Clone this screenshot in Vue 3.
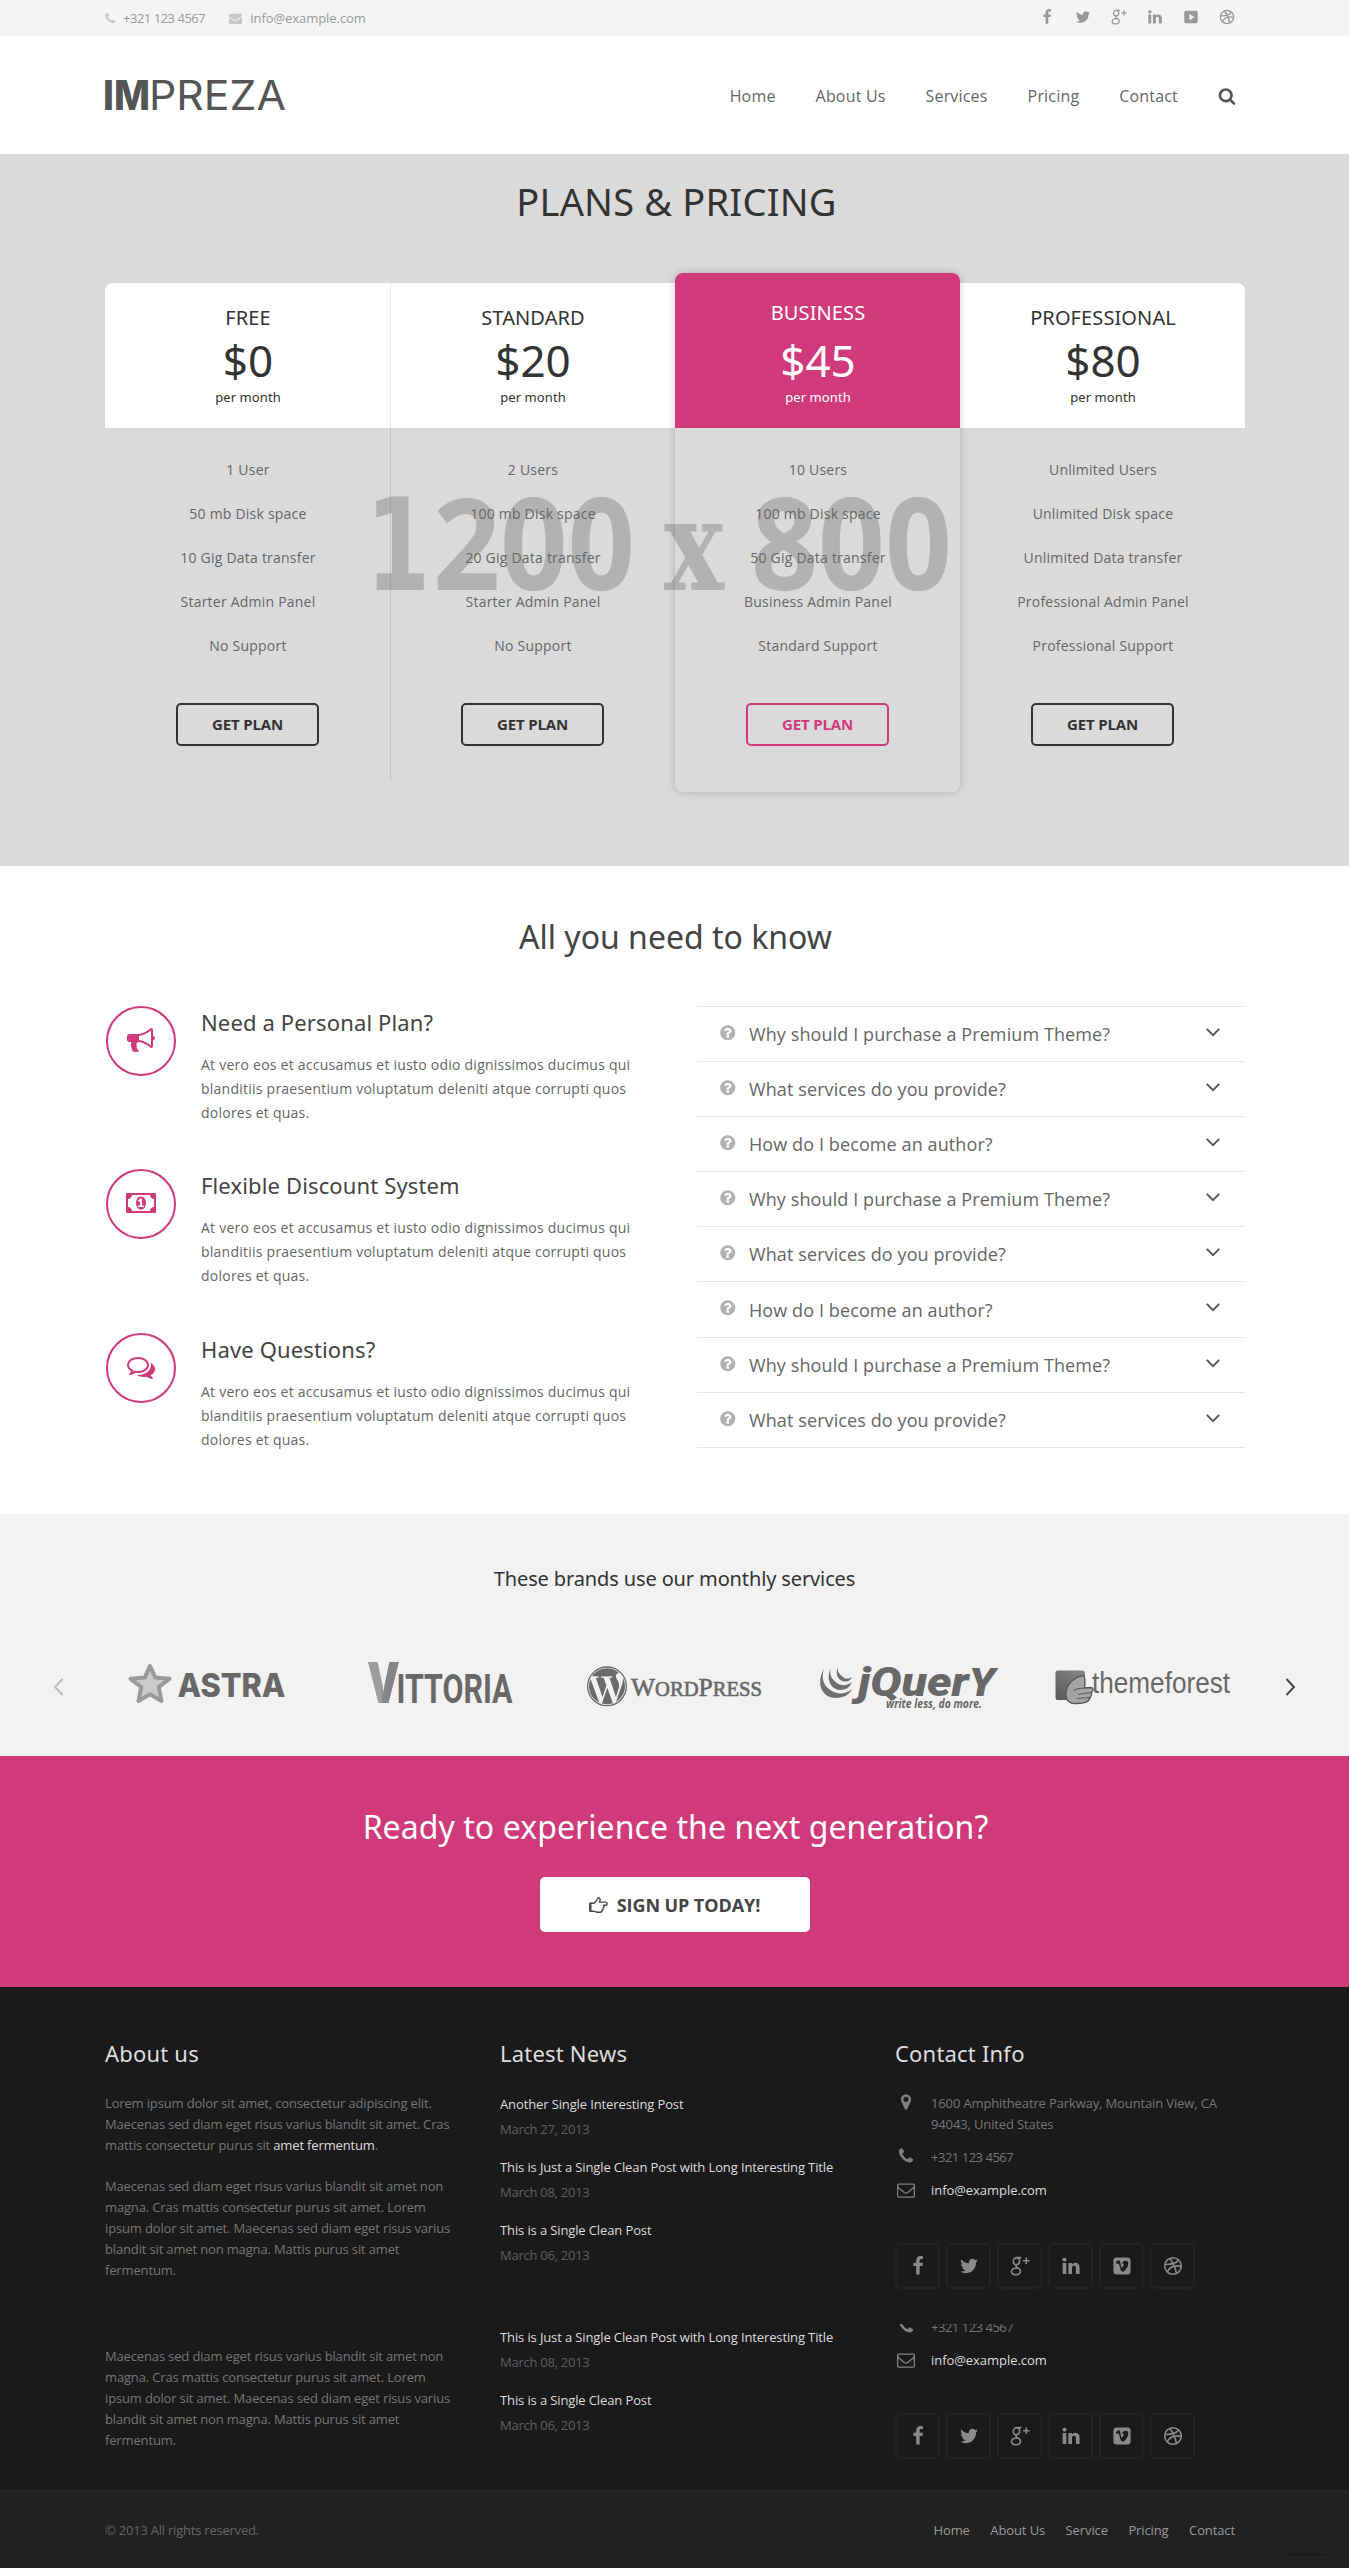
<script setup>
import { h } from 'vue'

const icons = {
  phone: 'M1600 1240q0 27-10 70.5t-21 68.5q-21 50-122 106-94 51-186 51-27 0-53-3.5t-57.5-12.5-47-14.5-55.5-20.5-49-18q-98-35-175-83-127-79-264-216t-216-264q-48-77-83-175-3-9-18-49t-20.5-55.5-14.5-47-12.5-57.5-3.5-53q0-92 51-186 56-101 106-122 25-11 68.5-21t70.5-10q14 0 21 3 18 6 53 76 11 19 30 54t35 63.5 31 53.5q3 4 17.5 25t21.5 35.5 7 28.5q0 20-28.5 50t-62 55-62 53-28.5 46q0 9 5 22.5t8.5 20.5 14 24 11.5 19q76 137 174 235t235 174q2 1 19 11.5t24 14 20.5 8.5 22.5 5q18 0 46-28.5t53-62 55-62 50-28.5q14 0 28.5 7t35.5 21.5 25 17.5q25 15 53.5 31t63.5 35 54 30q70 35 76 53 3 7 3 21z',
  envelope: 'M1792 710v794q0 66-47 113t-113 47h-1472q-66 0-113-47t-47-113v-794q44 49 101 87 362 246 497 345 57 42 92.500 65.500t94.500 48 110 24.500h2q51 0 110-24.500t94.500-48 92.500-65.500q170-123 498-345 57-39 100-87zm0-294q0 79-49 151t-122 123q-376 261-468 325-10 7-42.500 31t-54 38.500-52 32.500-57.500 27-50 9h-2q-23 0-50-9t-57.500-27-52-32.500-54-38.500-42.500-31q-91-64-262-182.500t-205-142.500q-62-42-117-115.500t-55-136.500q0-78 41.500-130t118.500-52h1472q65 0 112.500 47t47.500 113z',
  facebook: 'M1343 12v264h-157q-86 0-116 36t-30 108v189h293l-39 296h-254v759h-306v-759h-255v-296h255v-218q0-186 104-288.500t277-102.500q147 0 228 12z',
  twitter: 'M1684 408q-67 98-162 167 1 14 1 42 0 130-38 259.500t-115.500 248.500-184.500 210.500-258 146-323 54.500q-271 0-496-145 35 4 78 4 225 0 401-138-105-2-188-64.500t-114-159.500q33 5 61 5 43 0 85-11-112-23-185.500-111.500t-73.500-205.500v-4q68 38 146 41-66-44-105-115t-39-154q0-88 44-163 121 149 294.500 238.500t371.500 99.500q-8-38-8-74 0-134 94.500-228.500t228.500-94.500q140 0 236 102 109-21 205-78-37 115-142 178 93-10 186-50z',
  linkedin: 'M477 625v991h-330v-991h330zm21-306q1 73-50.500 122t-135.500 49h-2q-82 0-132-49t-50-122q0-74 51.500-122.500t134.500-48.500 133 48.500 51 122.500zm1166 729v568h-329v-530q0-105-40.500-164.500t-126.500-59.500q-63 0-105.500 34.500t-63.500 85.500q-11 30-11 81v553h-329q2-399 2-647t-1-296l-1-48h329v144h-2q20-32 41-56t56.500-52 87-43.500 114.500-15.500q171 0 275 113.500t104 332.500z',
  search: 'M1216 832q0-185-131.500-316.500t-316.500-131.500-316.500 131.500-131.500 316.500 131.500 316.500 316.500 131.500 316.500-131.500 131.500-316.500zm512 832q0 52-38 90t-90 38q-54 0-90-38l-343-342q-179 124-399 124-143 0-273.500-55.500t-225-150-150-225-55.500-273.500 55.500-273.500 150-225 225-150 273.500-55.500 273.500 55.500 225 150 150 225 55.500 273.500q0 220-124 399l343 343q37 37 37 90z',
  question: 'M1024 1376v-192q0-14-9-23t-23-9h-192q-14 0-23 9t-9 23v192q0 14 9 23t23 9h192q14 0 23-9t9-23zm256-672q0-88-55.500-163t-138.500-116-170-41q-243 0-371 213-15 24 8 42l132 100q7 6 19 6 16 0 25-12 53-68 86-92 34-24 86-24 48 0 85.500 26t37.500 59q0 38-20 61t-68 45q-63 28-115.500 86.500t-52.500 125.500v36q0 14 9 23t23 9h192q14 0 23-9t9-23q0-19 21.500-49.500t54.500-49.500q32-18 49-28.500t46-35 44.500-48 28-60.500 12.500-81zm384 192q0 209-103 385.500t-279.500 279.500-385.500 103-385.500-103-279.500-279.500-103-385.500 103-385.500 279.500-279.500 385.500-103 385.500 103 279.500 279.500 103 385.500z',
  marker: 'M1152 640q0-106-75-181t-181-75-181 75-75 181 75 181 181 75 181-75 75-181zm256 0q0 109-33 179l-364 774q-16 33-47.500 52t-67.500 19-67.500-19-46.500-52l-365-774q-33-70-33-179 0-212 150-362t362-150 362 150 150 362z',
  envelopeO: 'M1664 1504v-768q-32 36-69 66-268 206-426 338-51 43-83 67t-86.500 48.500-102.500 24.500h-2q-48 0-102.500-24.500t-86.500-48.500-83-67q-158-132-426-338-37-30-69-66v768q0 13 9.500 22.500t22.500 9.500h1472q13 0 22.500-9.500t9.500-22.500zm0-1051v-24.500l-.5-13-3-12.500-5.500-9-9-7.500-14-2.500h-1472q-13 0-22.500 9.500t-9.500 22.500q0 168 147 284 193 152 401 317 6 5 35 29.500t46 37.500 44.500 31.500 50.500 27.500 43 9h2q20 0 43-9t50.500-27.500 44.500-31.500 46-37.500 35-29.500q208-165 401-317 54-43 100.500-115.500t46.500-131.500zm128-37v1088q0 66-47 113t-113 47h-1472q-66 0-113-47t-47-113v-1088q0-66 47-113t113-47h1472q66 0 113 47t47 113z',
  bullhorn: 'M1664 640q53 0 90.500 37.500t37.500 90.500-37.500 90.500-90.500 37.500v384q0 52-38 90t-90 38q-417-347-812-380-58 19-91 66t-31 100.500 40 92.500q-20 33-23 65.500t6 58 33.500 55 48 50 61.500 50.500q-29 58-111.500 83t-168.500 11.500-132-55.500q-7-23-29.500-87.500t-32-94.500-23-89-15-101 3.500-98.500 22-110.500h-122q-66 0-113-47t-47-113v-192q0-66 47-113t113-47h480q435 0 896-384 52 0 90 38t38 90v384zm-128 604v-954q-394 302-768 343v270q377 42 768 341z',
  money: 'M768 1152h384v-96h-128v-448h-114l-148 137 77 80q42-37 55-57h2v288h-128v96zm512-256q0 70-21 142t-59.500 134-101.500 101-138 39-138-39-101.500-101-59.500-134-21-142 21-142 59.500-134 101.500-101 138-39 138 39 101.500 101 59.500 134 21 142zm512 256v-512q-106 0-181-75t-75-181h-1152q0 106-75 181t-181 75v512q106 0 181 75t75 181h1152q0-106 75-181t181-75zm128-832v1152q0 26-19 45t-45 19h-1792q-26 0-45-19t-19-45v-1152q0-26 19-45t45-19h1792q26 0 45 19t19 45z',
  comments: 'M704 384q-153 0-286 52t-211.500 141-78.500 191q0 82 53 158t149 132l97 56-35 84q34-20 62-39l44-31 53 10q78 14 153 14 153 0 286-52t211.500-141 78.500-191-78.500-191-211.500-141-286-52zm0-128q191 0 353.500 68.500t256.500 186.500 94 257-94 257-256.500 186.500-353.500 68.500q-86 0-176-16-124 88-278 128-36 9-86 16h-3q-11 0-20.500-8t-11.500-21q-1-3-1-6.500t.5-6.500 2-6l2.500-5 3.500-5.500 4-5 4.500-5 4-4.500q5-6 23-25t26-29.500 22.500-29 25-38.500 20.500-44q-124-72-195-177t-71-224q0-139 94-257t256.500-186.500 353.500-68.500zm822 1169q10 24 20.500 44t25 38.500 22.500 29 26 29.500 23 25q1 1 4 4.500t4.500 5 4 5 3.500 5.500l2.500 5 2 6 .5 6.500-1 6.500q-3 14-13 22t-22 7q-50-7-86-16-154-40-278-128-90 16-176 16-271 0-472-132 58 4 88 4 161 0 309-45t264-129q125-92 192-212t67-254q0-77-23-152 129 71 204 178t75 230q0 120-71 224.500t-195 176.500z',
  youtube: 'M330 200h1132q190 0 190 190v1012q0 190-190 190h-1132q-190 0-190-190v-1012q0-190 190-190zm390 350v700l560-350z',
  vimeo: 'M420 128h952q292 0 292 292v952q0 292-292 292h-952q-292 0-292-292v-952q0-292 292-292zm-60 500l70 92q90-66 112-66 80 0 150 280 66 260 106 340 60 130 166 130 110 0 262-196 220-284 236-490 14-284-230-292-264-8-350 268 60-26 100-26 96 0 84 100-8 64-80 176-70 112-106 112-46 0-84-176-14-60-48-290-34-214-176-200-62 6-212 138z',
}
const strokeIcons = {
  gplus: [
    'M11.300 1.600H7.200C4.600 1.600 3.300 3.300 3.300 5.200C3.300 7.100 4.600 8.600 6.500 8.600C8.500 8.600 9.600 7.100 9.600 5.300C9.600 3.300 8.600 1.700 6.900 1.700',
    'M6.700 8.700C5.500 9.800 5.900 10.700 7.200 11.400C9 12.300 10.400 13.300 10.400 15C10.400 17.200 8.500 18.700 5.800 18.700C3.300 18.700 1.500 17.500 1.500 15.600C1.500 13.300 4 12 7.500 12',
    'M13 4.800H19.600M16.300 1.500V8.100',
  ],
  dribbble: [
    'M10 1.700A8.300 8.300 0 1 1 10 18.300A8.300 8.300 0 1 1 10 1.700Z',
    'M6.800 2.500C9.800 6.200 12.200 11 13.400 17.400',
    'M1.900 8.500C7.500 8.700 13 7.600 15.600 4.100',
    'M4.200 15.800C7 10.800 12.500 9 18.200 10.500',
  ],
}

/* Glyph from the icon tables, sized in pixels */
const Icon = ({ name, size = 16 }) =>
  strokeIcons[name]
    ? h('svg', { viewBox: '0 0 20 20', width: size, height: size, fill: 'none', stroke: 'currentColor', 'stroke-width': 1.6 },
        strokeIcons[name].map((d) => h('path', { d })))
    : h('svg', {
        viewBox: name === 'money' ? '0 0 1920 1792' : '0 0 1792 1792',
        width: name === 'money' ? (size * 1920) / 1792 : size,
        height: size, fill: 'currentColor', 'fill-rule': 'evenodd',
      }, [h('path', { d: icons[name] })])
Icon.props = ['name', 'size']

const topSocial = ['facebook', 'twitter', 'gplus', 'linkedin', 'youtube', 'dribbble']
const footSocial = ['facebook', 'twitter', 'gplus', 'linkedin', 'vimeo', 'dribbble']
const nav = ['Home', 'About Us', 'Services', 'Pricing', 'Contact']
const footNav = ['Home', 'About Us', 'Service', 'Pricing', 'Contact']

const plans = [
  { name: 'FREE', price: '$0', items: ['1 User', '50 mb Disk space', '10 Gig Data transfer', 'Starter Admin Panel', 'No Support'] },
  { name: 'STANDARD', price: '$20', items: ['2 Users', '100 mb Disk space', '20 Gig Data transfer', 'Starter Admin Panel', 'No Support'] },
  { name: 'BUSINESS', price: '$45', featured: true, items: ['10 Users', '100 mb Disk space', '50 Gig Data transfer', 'Business Admin Panel', 'Standard Support'] },
  { name: 'PROFESSIONAL', price: '$80', items: ['Unlimited Users', 'Unlimited Disk space', 'Unlimited Data transfer', 'Professional Admin Panel', 'Professional Support'] },
]
const features = [
  { icon: 'bullhorn', title: 'Need a Personal Plan?' },
  { icon: 'money', title: 'Flexible Discount System' },
  { icon: 'comments', title: 'Have Questions?' },
]
const why = 'Why should I purchase a Premium Theme?'
const what = 'What services do you provide?'
const how = 'How do I become an author?'
const faq = [why, what, how, why, what, how, why, what]

const longPost = { title: 'This is Just a Single Clean Post with Long Interesting Title', date: 'March 08, 2013' }
const shortPost = { title: 'This is a Single Clean Post', date: 'March 06, 2013' }
const postGroups = [
  [{ title: 'Another Single Interesting Post', date: 'March 27, 2013' }, longPost, shortPost],
  [longPost, shortPost],
]
</script>

<template>
  <div class="page">
    <div class="topbar">
      <div class="wrap topbar-in">
        <div class="contacts">
          <span class="contact phone"><Icon name="phone" :size="13" />+321 123 4567</span>
          <span class="contact mail"><Icon name="envelope" :size="13" />info@example.com</span>
        </div>
        <div class="top-social">
          <a v-for="s in topSocial" :key="s"><Icon :name="s" :size="16" /></a>
        </div>
      </div>
    </div>

    <header class="header">
      <div class="wrap header-in">
        <svg class="logo" width="182" height="40" viewBox="0 0 182 40">
          <text class="logo-bold" x="-2" y="35" textLength="47" lengthAdjust="spacingAndGlyphs">IM</text>
          <text class="logo-thin" x="44" y="35" textLength="137" lengthAdjust="spacingAndGlyphs">PREZA</text>
        </svg>
        <nav class="nav">
          <a v-for="n in nav" :key="n">{{ n }}</a>
          <Icon name="search" :size="18" />
        </nav>
      </div>
    </header>

    <section class="hero">
      <svg class="placeholder" width="1349" height="712" viewBox="0 0 1349 712">
        <text class="ph-one" x="366" y="436" textLength="64" lengthAdjust="spacingAndGlyphs">1</text>
        <text class="ph-num" x="433" y="436" textLength="202" lengthAdjust="spacingAndGlyphs">200</text>
        <text class="ph-x" x="664" y="436" textLength="60" lengthAdjust="spacingAndGlyphs">x</text>
        <text class="ph-num" x="751" y="436" textLength="201" lengthAdjust="spacingAndGlyphs">800</text>
      </svg>
      <h1>PLANS &amp; PRICING</h1>
      <div class="wrap plans">
        <div v-for="p in plans" :key="p.name" class="plan" :class="{ featured: p.featured }">
          <div class="plan-head">
            <h2>{{ p.name }}</h2>
            <div class="price">{{ p.price }}</div>
            <div class="per">per month</div>
          </div>
          <ul>
            <li v-for="i in p.items" :key="i">{{ i }}</li>
          </ul>
          <a class="get">GET PLAN</a>
        </div>
      </div>
    </section>

    <section class="know">
      <h2>All you need to know</h2>
      <div class="wrap know-in">
        <div class="features">
          <div v-for="f in features" :key="f.title" class="feature">
            <div class="circle"><Icon :name="f.icon" :size="28" /></div>
            <div class="feature-text">
              <h3>{{ f.title }}</h3>
              <p>At vero eos et accusamus et iusto odio dignissimos ducimus qui blanditiis praesentium voluptatum deleniti atque corrupti quos dolores et quas.</p>
            </div>
          </div>
        </div>
        <div class="faq">
          <div v-for="(q, i) in faq" :key="i" class="q">
            <Icon name="question" :size="17.5" />
            <span>{{ q }}</span>
            <svg class="chev" width="14" height="9" viewBox="0 0 14 9"><path d="M0.800 0.800L7 7.200L13.200 0.800" /></svg>
          </div>
        </div>
      </div>
    </section>

    <section class="brands">
      <h2>These brands use our monthly services</h2>
      <div class="brand-row">
        <svg class="arrow prev" width="11" height="18" viewBox="0 0 11 18"><path d="M9.500 1L2 9L9.500 17" /></svg>
        <div class="brand">
          <svg width="157" height="50" viewBox="0 0 157 50">
            <path d="M22 6L27.300 17.600L41.500 18.800L30.800 26.800L33.500 41L22 34.300L10.500 41L13.200 26.800L2.500 18.800L16.700 17.600Z" fill="#cbcbcb" stroke="#9a9b98" stroke-width="4" stroke-linejoin="round" />
            <text class="b-astra" x="49.500" y="37" textLength="108" lengthAdjust="spacingAndGlyphs">ASTRA</text>
          </svg>
        </div>
        <div class="brand">
          <svg width="145" height="50" viewBox="0 0 145 50">
            <defs>
              <linearGradient id="vgrad" x1="0" x2="1" y1="0" y2="0.150">
                <stop offset="0.500" stop-color="#9d9d9d" />
                <stop offset="0.600" stop-color="#858585" />
              </linearGradient>
            </defs>
            <text class="b-v" x="0" y="43" textLength="31" lengthAdjust="spacingAndGlyphs" fill="url(#vgrad)">V</text>
            <text class="b-vit" x="28.500" y="43" textLength="116" lengthAdjust="spacingAndGlyphs">ITTORIA</text>
          </svg>
        </div>
        <div class="brand">
          <svg width="174" height="50" viewBox="0 0 174 50">
            <g transform="translate(0 6.300) scale(1.667)">
              <circle cx="12" cy="12" r="11.600" fill="none" stroke="#6b6b6b" stroke-width="0.800" />
              <path fill="#6b6b6b" d="M21.469 6.825c.84 1.537 1.318 3.300 1.318 5.175 0 3.979-2.156 7.456-5.363 9.325l3.295-9.527c.615-1.540.82-2.771.82-3.864 0-.405-.026-.78-.07-1.110m-7.981.105c.647-.03 1.232-.105 1.232-.105.582-.075.514-.93-.067-.899 0 0-1.755.135-2.880.135-1.064 0-2.850-.15-2.850-.15-.585-.03-.661.855-.075.885 0 0 .54.061 1.125.09l1.680 4.605-2.370 7.080L5.354 6.900c.649-.03 1.234-.1 1.234-.1.585-.075.516-.93-.065-.896 0 0-1.746.138-2.874.138-.2 0-.438-.008-.69-.015C4.911 3.150 8.235 1.215 12 1.215c2.809 0 5.365 1.072 7.286 2.833-.046-.003-.091-.009-.141-.009-1.060 0-1.812.923-1.812 1.914 0 .89.513 1.643 1.060 2.531.411.72.89 1.643.89 2.977 0 .915-.354 1.994-.821 3.479l-1.075 3.585-3.900-11.610zM12 22.784c-1.059 0-2.081-.153-3.048-.437l3.237-9.406 3.315 9.087c.024.053.05.101.078.149-1.120.393-2.325.609-3.582.609M1.211 12c0-1.564.336-3.050.935-4.390L7.290 21.709C3.694 19.960 1.212 16.271 1.211 12" />
            </g>
            <text class="b-wp" x="44" y="35.700" textLength="131" lengthAdjust="spacingAndGlyphs">W<tspan class="sm">ORD</tspan>P<tspan class="sm">RESS</tspan></text>
          </svg>
        </div>
        <div class="brand">
          <svg width="178" height="50" viewBox="0 0 178 50">
            <g fill="#707070">
              <path d="M5 9C-3 22 2 38 17 38C25 38 31 34 33 29C27 34 19 35 13 31C4 26 2 18 5 9Z" />
              <path d="M12 8C7 17 10 29 21 30C27 30 31 27 33 22C28 26 22 26 18 23C12 19 10 14 12 8Z" />
              <path d="M19 7C16 13 18 20 25 21.500C29 22 32 20 33 17C30 19 26 19 24 17C20 14 18 11 19 7Z" />
            </g>
            <text class="b-jq" x="39" y="36" textLength="137" lengthAdjust="spacingAndGlyphs">jQuer<tspan class="y">Y</tspan></text>
            <text class="b-jqs" x="67" y="48" textLength="96" lengthAdjust="spacingAndGlyphs">write less, do more.</text>
          </svg>
        </div>
        <div class="brand">
          <svg width="175" height="50" viewBox="0 0 175 50">
            <defs>
              <linearGradient id="tfg" x1="0" x2="1" y1="1" y2="0">
                <stop offset="0" stop-color="#585858" />
                <stop offset="1" stop-color="#8a8a8a" />
              </linearGradient>
            </defs>
            <rect x="0.500" y="10.500" width="29.500" height="29.500" rx="2.500" fill="url(#tfg)" />
            <path d="M28.500 15.500C17 17 10 27 11 36C12 42.500 17 44 22 43.500C28 43.500 34 42 35 38C36 36 37 35 36.500 32.500C39 31 38.500 27.500 36 27.500L29.500 28C30 24 31 18 28.500 15.500Z" fill="#a4a4a4" stroke="#555" stroke-width="1.300" />
            <path d="M19 31C21 28.500 26 28 29.500 28M23 34.500L36.500 32.500M22 38.500L35 37.500" fill="none" stroke="#5a5a5a" stroke-width="1.100" />
            <text class="b-tf" x="37" y="32.700" textLength="138" lengthAdjust="spacingAndGlyphs">themeforest</text>
          </svg>
        </div>
        <svg class="arrow next" width="11" height="18" viewBox="0 0 11 18"><path d="M1.500 1L9 9L1.500 17" /></svg>
      </div>
    </section>

    <section class="cta">
      <h2>Ready to experience the next generation?</h2>
      <a class="signup">
        <svg width="19" height="16" viewBox="0 0 19 16" fill="none" stroke="#444" stroke-width="1.400" stroke-linejoin="round">
          <path d="M0.800 6.200H4.800C6.600 5.600 7.200 4.200 8 2.600C8.400 1.600 8.700 0.800 9.600 0.800C11.200 0.800 11.400 2.600 10.800 4L10.400 5.100H16.600C18.700 5.100 18.700 8.300 16.600 8.300H14.500C15.400 9.300 15 10.500 14.100 10.800C14.600 11.900 14 12.900 13.200 13C13.200 14.400 12.200 15.200 11 15.200H8.400C6.800 15.200 6 14.400 4.800 14.300H0.800Z" />
          <path d="M1.500 7.200V13.600" stroke-width="2" />
        </svg>
        SIGN UP TODAY!
      </a>
    </section>

    <footer class="footer">
      <div class="wrap foot-in">
        <div class="col about">
          <h3>About us</h3>
          <p>Lorem ipsum dolor sit amet, consectetur adipiscing elit. Maecenas sed diam eget risus varius blandit sit amet. Cras mattis consectetur purus sit <a>amet fermentum</a>.</p>
          <p>Maecenas sed diam eget risus varius blandit sit amet non magna. Cras mattis consectetur purus sit amet. Lorem ipsum dolor sit amet. Maecenas sed diam eget risus varius blandit sit amet non magna. Mattis purus sit amet fermentum.</p>
          <p class="repeat">Maecenas sed diam eget risus varius blandit sit amet non magna. Cras mattis consectetur purus sit amet. Lorem ipsum dolor sit amet. Maecenas sed diam eget risus varius blandit sit amet non magna. Mattis purus sit amet fermentum.</p>
        </div>
        <div class="col news">
          <h3>Latest News</h3>
          <div v-for="(g, gi) in postGroups" :key="gi" class="posts">
            <div v-for="p in g" :key="p.title" class="post">
              <a>{{ p.title }}</a>
              <span>{{ p.date }}</span>
            </div>
          </div>
        </div>
        <div class="col info">
          <h3>Contact Info</h3>
          <div v-for="n in 2" :key="n" class="info-group">
            <div v-if="n === 1" class="line address"><i><Icon name="marker" :size="18" /></i><span>1600 Amphitheatre Parkway, Mountain View, CA 94043, United States</span></div>
            <div class="line tel"><i><Icon name="phone" :size="18" /></i><span>+321 123 4567</span></div>
            <div class="line email"><i><Icon name="envelopeO" :size="18" /></i><a>info@example.com</a></div>
            <div class="socials">
              <a v-for="s in footSocial" :key="s"><Icon :name="s" :size="20" /></a>
            </div>
          </div>
        </div>
      </div>
    </footer>

    <div class="bottom">
      <div class="wrap bottom-in">
        <span class="copy">© 2013 All rights reserved.</span>
        <div class="foot-nav"><a v-for="n in footNav" :key="n">{{ n }}</a></div>
      </div>
      <i class="to-top"></i>
    </div>
  </div>
</template>

<style>
body { background: #fff; }
</style>

<style scoped>
.page { width: 1349px; height: 2568px; font-family: "Open Sans", "Noto Sans", sans-serif; font-size: 14px; color: #666; }
.page * { box-sizing: border-box; }
h1, h2, h3, p, ul { margin: 0; padding: 0; font-weight: 400; }
h1, h2, h3 { font-family: "Noto Sans", "Open Sans", sans-serif; }
svg { display: block; flex: none; overflow: visible; }
.wrap { width: 1140px; margin-left: 105px; }

.topbar { height: 36px; background: #f4f4f4; }
.topbar-in { display: flex; justify-content: space-between; align-items: center; height: 36px; }
.contacts { display: flex; align-items: center; font-size: 13px; color: #999; }
.contact { display: flex; align-items: center; white-space: nowrap; }
.contact svg { color: #c6c6c6; margin-right: 8px; }
.mail { letter-spacing: -0.060px; }
.phone { letter-spacing: -0.480px; margin-right: 24px; }
.phone svg { margin-left: -1px; margin-right: 6px; }
.top-social { display: flex; color: #999; }
.top-social a { width: 36px; display: flex; justify-content: center; margin-top: -2px; }

.header { height: 118px; background: #fff; }
.header-in { display: flex; justify-content: space-between; height: 118px; padding-right: 10px; align-items: center; }
.logo { fill: #555; font-family: "Inter", sans-serif; font-size: 41px; }
.logo-bold { font-weight: 800; }
.logo-thin { font-weight: 400; }
.nav { display: flex; align-items: center; gap: 40px; font-size: 16px; letter-spacing: 0.180px; color: #666; padding-top: 1px; }
.nav svg { color: #555; margin-right: -1px; }

.hero { position: relative; height: 712px; background: #dadada; padding-top: 22px; }
.placeholder { position: absolute; left: 0; top: 0; fill: #b2b2b2; font-size: 128px; font-weight: 700; }
.ph-num { font-family: "Open Sans", sans-serif; }
.ph-one { font-family: "DejaVu Sans", sans-serif; }
.ph-x { font-family: "DejaVu Serif", serif; }
.hero h1 { position: relative; text-align: center; font-size: 38px; line-height: 50px; letter-spacing: 0.190px; color: #333; text-indent: 4px; }
.plans { position: relative; display: flex; align-items: flex-start; margin-top: 57px; }
.plan { width: 285px; height: 498px; text-align: center; border-radius: 8px; box-shadow: 0 1px 2px rgba(0, 0, 0, 0.025); }
.plan:first-child { position: relative; }
.plan:first-child::after { content: ""; position: absolute; right: -1px; top: 0; width: 1px; height: 498px; background: rgba(0, 0, 0, 0.090); z-index: 1; }
.plan-head { height: 145px; padding-top: 21px; background: #fff; color: #333; font-family: "Noto Sans", sans-serif; text-indent: 1px; }
.plan:first-child .plan-head { border-top-left-radius: 8px; }
.plan:last-child .plan-head { border-top-right-radius: 8px; }
.plan-head h2 { font-size: 20px; line-height: 28px; letter-spacing: 0.100px; }
.price { font-size: 44px; line-height: 58px; margin-top: -1px; }
.per { font-size: 13px; line-height: 16px; letter-spacing: 0.080px; }
.plan ul { list-style: none; padding-top: 20px; }
.plan li { height: 44px; line-height: 44px; letter-spacing: 0.220px; color: #666; text-indent: 1px; }
.get { display: block; width: 143px; height: 43px; margin: 35px auto 0; border: 2px solid #333; border-radius: 5px; font-size: 15px; font-weight: 700; line-height: 38px; letter-spacing: -0.150px; color: #333; }
.featured { position: relative; z-index: 2; height: 519px; margin-top: -10px; box-shadow: 0 0 9px rgba(0, 0, 0, 0.200); }
.featured .plan-head { height: 155px; padding-top: 26px; background: #d13a7a; color: #fff; border-radius: 8px 8px 0 0; }
.featured .price { margin-top: 4px; }
.featured .get { color: #d13a7a; border-color: #d13a7a; }

.know { height: 648px; padding-top: 49px; }
.know > h2 { text-align: center; font-size: 32px; line-height: 44px; color: #444; text-indent: 2px; }
.know-in { display: flex; margin-top: 47px; }
.features { width: 592px; }
.feature { display: flex; height: 163px; }
.feature:nth-child(2) { height: 164px; }
.circle { width: 70px; height: 70px; flex: none; margin: 0 25px 0 1px; border: 2px solid #d13a7a; border-radius: 50%; color: #d13a7a; display: flex; align-items: center; justify-content: center; }
.circle svg { margin-top: -2px; }
.feature-text { width: 445px; padding-top: 1px; }
.feature h3 { font-size: 22px; line-height: 30px; letter-spacing: 0.140px; color: #444; margin-bottom: 16px; }
.feature p { line-height: 24px; letter-spacing: 0.240px; }
.faq { width: 548px; border-top: 1px solid #e5e5e5; }
.q { display: flex; align-items: center; height: 55px; border-bottom: 1px solid #e5e5e5; font-size: 18px; letter-spacing: 0.100px; padding: 0 25px 0 22px; }
.q:nth-child(6) { height: 56px; }
.q span { flex: 1; margin-left: 12.500px; white-space: nowrap; }
.q svg { color: #b2b2b2; margin-bottom: 3px; }
.q .chev { fill: none; stroke: #555; stroke-width: 1.900; margin-bottom: 4px; }

.brands { height: 242px; background: #f2f2f2; padding-top: 51px; }
.brands h2 { text-align: center; font-size: 20px; line-height: 28px; letter-spacing: -0.128px; color: #333; }
.brand-row { display: flex; align-items: center; height: 70px; margin: 57px 0 0 52.500px; }
.brand { width: 234px; display: flex; justify-content: center; }
.arrow { fill: none; stroke-width: 1.900; }
.prev { stroke: #bbb; margin-right: 25.500px; margin-top: 3px; }
.next { stroke: #444; margin-left: 26px; margin-top: 3px; }
.brand text { fill: #686868; }
.b-astra { font: 800 32.500px "Inter", sans-serif; }
.brand .b-v { font: 800 57px "Open Sans", sans-serif; fill: url(#vgrad); }
.b-vit { font: 700 41px "Roboto", sans-serif; }
.b-wp { font: 400 26px "Liberation Serif", serif; stroke: #686868; stroke-width: 0.600; }
.b-wp .sm { font-size: 21px; }
.b-jq { font: italic 900 41px "Roboto", sans-serif; }
.b-jq .y { font-size: 38px; }
.b-jqs { font: italic 700 12.500px "Open Sans", sans-serif; }
.b-tf { font: 400 29px "Liberation Sans", sans-serif; }

.cta { height: 231px; background: #d13a7a; padding-top: 49px; }
.cta h2 { text-align: center; font-size: 32px; line-height: 44px; letter-spacing: 0.065px; color: #fff; text-indent: 2px; }
.signup { display: flex; align-items: center; justify-content: center; gap: 9px; width: 270px; height: 55px; margin: 28px auto 0; background: #fff; border-radius: 5px; font-size: 18px; font-weight: 700; letter-spacing: -0.090px; color: #444; }

.footer { height: 503px; background: #1a1a1a; padding-top: 51px; font-size: 13px; line-height: 21px; color: #777; }
.foot-in { display: flex; }
.col { width: 395px; }
.footer h3 { font-size: 22px; line-height: 30px; letter-spacing: 0.200px; color: #ddd; margin-bottom: 25px; }
.footer a { color: #ddd; }
.about p { width: 350px; margin-bottom: 20px; letter-spacing: -0.150px; }
.about .repeat { margin-top: 65px; }
.footer .news h3 { margin-bottom: 26px; }
.posts { margin-bottom: 61px; }
.post { margin-bottom: 17px; }
.post a, .post span { display: block; white-space: nowrap; letter-spacing: -0.120px; }
.post span { margin-top: 4px; color: #606060; letter-spacing: -0.262px; }
.info { width: 350px; }
.line { display: flex; margin-bottom: 12px; }
.line i { display: flex; justify-content: center; align-items: center; width: 18px; height: 20px; margin: 0 16px 0 2px; color: #808080; }
.address { letter-spacing: -0.130px; }
.address i { height: 18px; }
.address span { width: 305px; }
.tel { letter-spacing: -0.480px; }
.tel i { height: 18px; }
.email { letter-spacing: -0.050px; }
.socials { display: flex; gap: 6px; padding-top: 30px; }
.socials a { display: flex; align-items: center; justify-content: center; width: 45px; height: 46px; border: 2px solid #222; border-radius: 5px; color: #8a8a8a; }
.info-group + .info-group { margin-top: 35px; overflow: hidden; }
.info-group + .info-group .tel { margin-top: -7px; }

.bottom { position: relative; height: 78px; background: #212121; border-top: 3px solid #242424; font-size: 13px; }
.bottom-in { display: flex; justify-content: space-between; align-items: center; height: 74px; padding-right: 10px; }
.copy { color: #666; letter-spacing: -0.222px; }
.foot-nav { display: flex; gap: 20.500px; color: #999; letter-spacing: -0.110px; }
.to-top { position: absolute; left: 1287px; top: 61px; width: 46px; height: 1px; background: linear-gradient(90deg, #161616 70%, #212121); }
</style>
